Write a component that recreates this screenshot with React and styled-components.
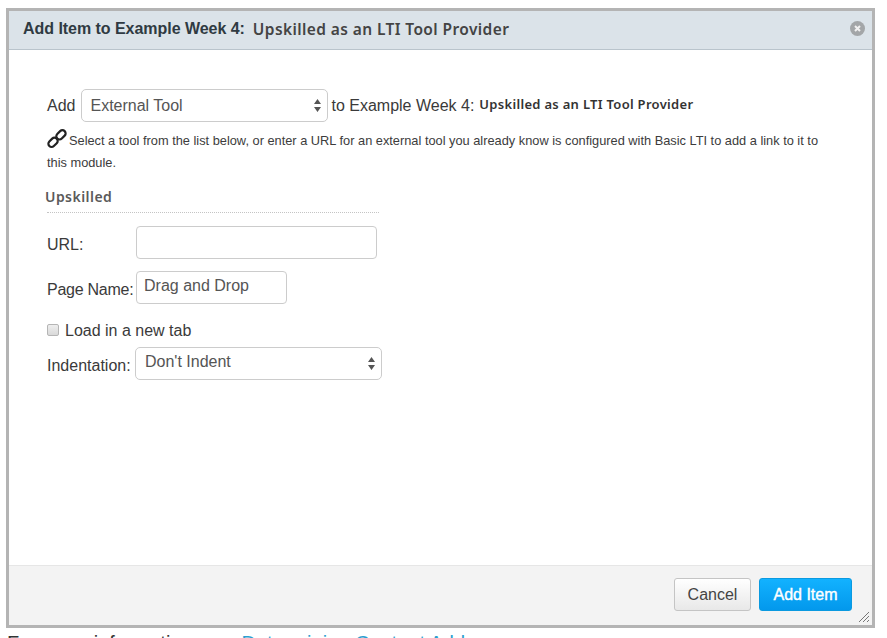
import React from "react";
import styled, { createGlobalStyle } from "styled-components";

const GlobalStyle = createGlobalStyle`
  html, body {
    margin: 0;
    height: 100%;
    overflow: hidden;
    background: #fff;
    font-family: "Liberation Sans", Arial, sans-serif;
    color: #333;
  }
`;

const Page = styled.div`
  width: 887px;
  height: 638px;
  overflow: hidden;
  padding: 8px 0 0 6px;
  box-sizing: border-box;
`;

const Dialog = styled.div`
  position: relative;
  width: 869px;
  height: 620px;
  box-sizing: border-box;
  border: 3px solid #b4b4b4;
  display: flex;
  flex-direction: column;
  background: #fff;
`;

const Header = styled.div`
  height: 39px;
  flex: none;
  box-sizing: border-box;
  display: flex;
  align-items: center;
  padding: 0 7px 3px 14px;
  background: #dbe3e9;
  border-bottom: 1px solid #b9c4cc;
`;

const Title = styled.span`
  font-size: 16px;
  font-weight: 700;
  letter-spacing: -0.04px;
  color: #2f3a42;
`;

const Overlay = styled.span`
  font-family: "Noto Sans", "Open Sans", sans-serif;
  font-weight: 600;
  font-size: ${(p) => p.$size}px;
  letter-spacing: ${(p) => p.$spacing || 0}px;
  color: ${(p) => p.$color || "#444"};
  margin-left: ${(p) => p.$left || 0}px;
  margin-bottom: ${(p) => p.$lift || 0}px;
  white-space: nowrap;
`;

const CloseButton = styled.button`
  margin-left: auto;
  width: 15px;
  height: 15px;
  padding: 0;
  border: 0;
  border-radius: 50%;
  background: #a3a6a8;
  display: flex;
  align-items: center;
  justify-content: center;
`;

const Body = styled.div`
  flex: 1;
  padding: 39px 38px 0 38px;
  display: flex;
  flex-direction: column;
`;

const AddRow = styled.div`
  display: flex;
  align-items: center;
  font-size: 16px;
  white-space: nowrap;
  color: #3a3a3a;
`;

const SelectBox = styled.div`
  width: ${(p) => p.$width}px;
  height: 33px;
  box-sizing: border-box;
  margin: ${(p) => p.$margin || 0};
  border: 1px solid #ccc;
  border-radius: 5px;
  background: #fff;
  display: flex;
  align-items: center;
  justify-content: space-between;
  padding: ${(p) => (p.$raised ? "0 5px 4px 9px" : "0 5px 0 8px")};
  font-size: 16px;
  color: #555;
  flex: none;
`;

const Arrows = styled.svg`
  width: 9px;
  height: 15px;
  flex: none;
  margin-top: ${(p) => (p.$raised ? 4 : 0)}px;
`;

const Hint = styled.p`
  margin: 7px 0 0;
  font-size: 12.8px;
  line-height: 22px;
  color: #3c3c3c;
  width: 775px;
`;

const LinkIcon = styled.svg`
  width: 20px;
  height: 20px;
  vertical-align: -4px;
  margin-right: 2px;
`;

const SectionTitle = styled.div`
  margin: 12px 0 0 -2px;
  height: 26px;
  line-height: 22px;
`;

const Divider = styled.div`
  width: 332px;
  border-top: 1px dotted #c4c4c4;
  margin-bottom: 13px;
`;

const FieldRow = styled.label`
  display: flex;
  align-items: center;
  height: 33px;
  margin-bottom: ${(p) => p.$gap || 0}px;
  font-size: 16px;
  color: #3a3a3a;
`;

const FieldLabel = styled.span`
  width: ${(p) => p.$width}px;
  flex: none;
  white-space: nowrap;
  padding-top: 5px;
  letter-spacing: ${(p) => p.$spacing || 0}px;
`;

const TextInput = styled.input`
  width: ${(p) => p.$width}px;
  height: 33px;
  box-sizing: border-box;
  border: 1px solid #ccc;
  border-radius: 4px;
  padding: 0 7px 4px;
  font: 16px "Liberation Sans", Arial, sans-serif;
  color: #555;
  outline: none;
`;

const CheckRow = styled.label`
  display: flex;
  align-items: center;
  height: 18px;
  margin: 18px 0 7px;
  font-size: 16px;
  color: #3a3a3a;
`;

const CheckBox = styled.input`
  appearance: none;
  width: 12px;
  height: 12px;
  margin: 0 6px 3px 0;
  border: 1px solid #b5b5b5;
  border-radius: 2px;
  background: linear-gradient(#eee, #d9d9d9);
`;

const Footer = styled.div`
  height: 60px;
  flex: none;
  box-sizing: border-box;
  display: flex;
  justify-content: flex-end;
  align-items: flex-start;
  gap: 8px;
  padding: 12px 20px 0 0;
  background: #f3f3f3;
  border-top: 1px solid #e6e6e6;
`;

const Button = styled.button`
  height: 33px;
  width: ${(p) => p.$width}px;
  box-sizing: border-box;
  border-radius: 3px;
  font: 16px "Liberation Sans", Arial, sans-serif;
  border: 1px solid ${(p) => (p.$primary ? "#0a9ae0" : "#c4c4c4")};
  color: ${(p) => (p.$primary ? "#fff" : "#444")};
  background: ${(p) =>
    p.$primary
      ? "linear-gradient(#12b2ff, #0398ec)"
      : "linear-gradient(#fff, #e8e8e8)"};
  -webkit-text-stroke: ${(p) => (p.$primary ? "0.4px #fff" : "0")};
`;

const Grip = styled.svg`
  position: absolute;
  right: 2px;
  bottom: 2px;
  width: 13px;
  height: 13px;
`;

const BelowText = styled.div`
  margin: 3px 0 0 1px;
  font-size: 20px;
  line-height: 24px;
  color: #333;
  white-space: nowrap;
`;

const BelowLink = styled.a`
  color: #2d9fd0;
  text-decoration: none;
`;

const UpDown = ({ raised }) => (
  <Arrows viewBox="0 0 9 15" $raised={raised}>
    <path d="M4.5 1 8 6H1zM4.5 14 1 9h7z" fill="#555" />
  </Arrows>
);

const App = () => (
  <Page>
    <GlobalStyle />
    <Dialog>
      <Header>
        <Title>Add Item to Example Week 4:</Title>
        <Overlay $size={15.5} $spacing={0.4} $left={8}>
          Upskilled as an LTI Tool Provider
        </Overlay>
        <CloseButton aria-label="Close">
          <svg width="9" height="9" viewBox="0 0 9 9">
            <path d="M2 2l5 5M7 2L2 7" stroke="#f1f1f1" strokeWidth="2" />
          </svg>
        </CloseButton>
      </Header>
      <Body>
        <AddRow>
          Add
          <SelectBox $width={247} $margin="0 3px 0 6px">
            External Tool
            <UpDown />
          </SelectBox>
          to Example Week 4:
          <Overlay $size={13} $spacing={0.3} $left={5} $lift={4} $color="#333">
            Upskilled as an LTI Tool Provider
          </Overlay>
        </AddRow>
        <Hint>
          <LinkIcon viewBox="0 0 20 20">
            <g fill="none" stroke="#222" strokeWidth="2.2">
              <rect x="0.8" y="10.2" width="10.5" height="6.4" rx="3.2" transform="rotate(-45 6 13.4)" />
              <rect x="8.7" y="2.6" width="10.5" height="6.4" rx="3.2" transform="rotate(-45 14 5.8)" />
            </g>
          </LinkIcon>
          Select a tool from the list below, or enter a URL for an external tool you
          already know is configured with Basic LTI to add a link to it to this module.
        </Hint>
        <SectionTitle>
          <Overlay $size={14} $spacing={0.45} $color="#5a5a5a">
            Upskilled
          </Overlay>
        </SectionTitle>
        <Divider />
        <FieldRow $gap={12}>
          <FieldLabel $width={89}>URL:</FieldLabel>
          <TextInput $width={241} />
        </FieldRow>
        <FieldRow>
          <FieldLabel $width={89} $spacing={-0.25}>Page Name:</FieldLabel>
          <TextInput $width={151} defaultValue="Drag and Drop" />
        </FieldRow>
        <CheckRow>
          <CheckBox type="checkbox" />
          Load in a new tab
        </CheckRow>
        <FieldRow>
          <FieldLabel $width={88}>Indentation:</FieldLabel>
          <SelectBox $width={247} $raised>
            Don't Indent
            <UpDown raised />
          </SelectBox>
        </FieldRow>
      </Body>
      <Footer>
        <Button $width={77}>Cancel</Button>
        <Button $width={93} $primary>Add Item</Button>
      </Footer>
      <Grip viewBox="0 0 13 13">
        <path d="M2 12 12 2M6 12l6-6M10 12l2-2" stroke="#777" strokeWidth="1" />
      </Grip>
    </Dialog>
    <BelowText>
      For more information, see <BelowLink href="#">Determining Content Add...</BelowLink>
    </BelowText>
  </Page>
);

export default App;
